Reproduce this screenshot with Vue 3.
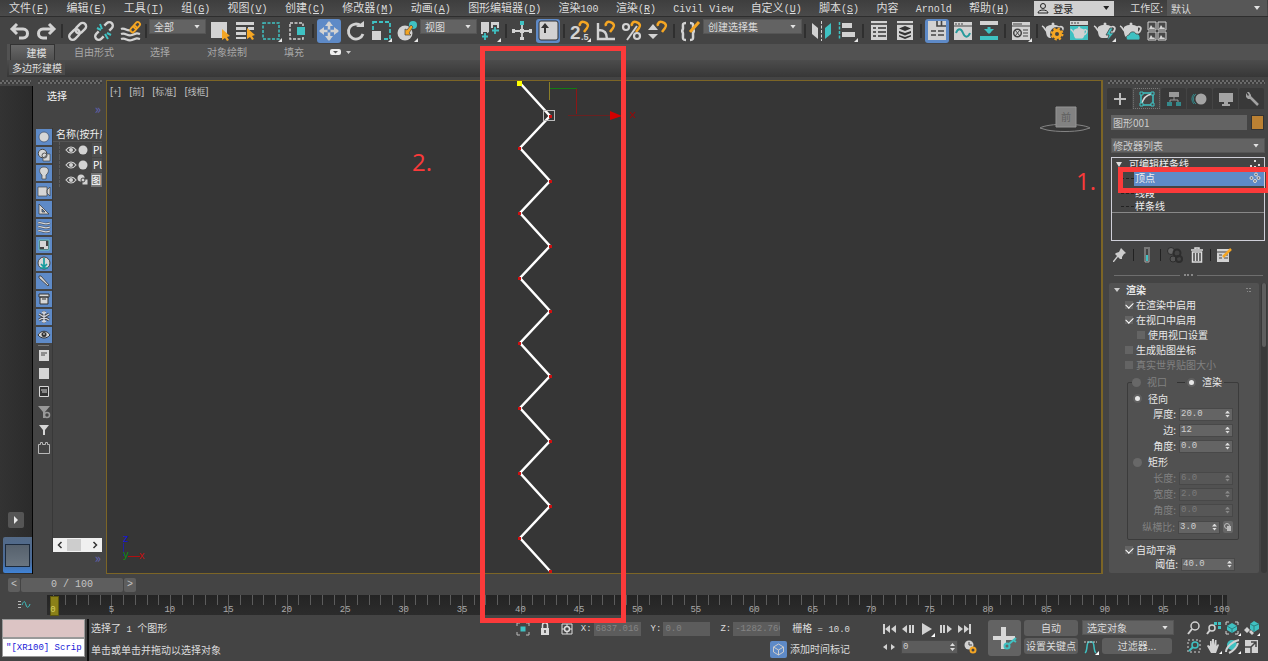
<script setup>
import { ref } from 'vue'

const L = '#d2d2d2'
const T = '#3fc1c2'
const O = '#f5a623'
const corner = '<path d="M24 20v4h-4z" fill="#e6e6e6"/>'
const teapot = '<path d="M6 9c4-3 10-3 14 0l0 4c0 4-2 7-4 7h-6c-3 0-4-4-4-7z" fill="#d2d2d2"/><circle cx="13" cy="6" r="1.500" fill="#d2d2d2"/><path d="M8 14C5 13 5 9 2 8M19 15c3 0 5-5 3-6-1-1-3 0-3 1" fill="none" stroke="#d2d2d2" stroke-width="1.800"/>'
const magnet = '<path d="M13 8c-1-3 2-5 4-4 4 1 5 4 3 6l-3 4" fill="none" stroke="#f5a623" stroke-width="2.500"/>'

const icons = {
  undo: `<path d="M10 6 5 11l5 5M5 11h11c6 0 6 9 0 9h-4" fill="none" stroke="${L}" stroke-width="3"/>`,
  redo: `<path d="m16 6 5 5-5 5M21 11H10c-6 0-6 9 0 9h4" fill="none" stroke="${L}" stroke-width="3"/>`,
  link: `<g fill="none" stroke="${L}" stroke-width="2.400" transform="rotate(-45 13 13)"><rect x="2" y="9.500" width="12" height="7" rx="3.500"/><rect x="11" y="9.500" width="12" height="7" rx="3.500"/></g>`,
  unlink: `<g fill="none" stroke="${L}" stroke-width="2.400" transform="rotate(-45 13 13)"><path d="M9 9.500H5.500a3.500 3.500 0 0 0 0 7H9M17 9.500h3.500a3.500 3.500 0 0 1 0 7H17"/></g><path d="m9 6 2 5M6 10l4 2M16 15l4 2M14 16l3 5" stroke="${T}" stroke-width="2"/>`,
  bind: `<path d="M4 11c4-2 6 3 10 1M4 16c5-2 6 3 11 1s5-2 8-1M4 21c5-2 6 3 11 1s5-2 8-1" fill="none" stroke="${L}" stroke-width="2.200"/><g fill="none" stroke="${O}" stroke-width="1.800" transform="rotate(-48 18 9)"><rect x="12" y="7" width="7" height="4.500" rx="2"/><rect x="17" y="7" width="7" height="4.500" rx="2"/></g>`,
  pick: `<path d="M5 4h16v16H5z" fill="${L}"/><path d="m16 11 0 11 3-2 2 3 2-1-2-3 3-1z" fill="${O}"/>`,
  pickList: `<path d="M4 4h18v3H4zM4 9h10v3H4zM4 14h10v3H4zM4 19h10v2H4zM16 9h6v3h-6z" fill="${L}"/><path d="m15 10 0 11 3-2 2 3 2-1-2-3 3-1z" fill="${O}"/>`,
  region: `<rect x="5" y="5" width="16" height="16" fill="none" stroke="${T}" stroke-width="1.500" stroke-dasharray="3 1.500"/>${corner}`,
  crossing: `<rect x="6" y="5" width="13" height="16" fill="none" stroke="${L}" stroke-width="1.500" stroke-dasharray="3 1.500"/><path d="M12 8h10v10H12z" fill="#444"/><path d="M13 9h8v8h-8z" fill="${T}"/>`,
  move: `<path d="M13 4v18M4 13h18" stroke="${L}" stroke-width="2.500"/><path d="m13 3 4 5H9zM13 23l4-5H9zM3 13l5-4v8zM23 13l-5-4v8z" fill="${L}"/><path d="M11.500 11.500h3v3h-3z" fill="#5e8ac7"/>`,
  rotate: `<path d="M19 8a7.500 7.500 0 1 0 2 8" fill="none" stroke="${L}" stroke-width="2.800"/><path d="M14 9h8V3z" fill="${L}"/>`,
  scale: `<rect x="5" y="4" width="17" height="17" fill="none" stroke="${T}" stroke-width="1.800" stroke-dasharray="4 2"/><path d="M3 12h12v11H3z" fill="#444"/><path d="M4 13h9v9H4z" fill="${L}"/>${corner}`,
  place: `<circle cx="11" cy="15" r="7.500" fill="${L}"/><circle cx="19" cy="7" r="4" fill="${T}"/><path d="m11 11 0 6h6l-2-2 4-6-2-2-4 5z" fill="${O}" stroke="#444" stroke-width=".7"/>${corner}`,
  pivot: `<path d="M4 4h8v10l-3 2H4zM14 4h8v7h-8z" fill="${L}"/><path d="M8 14v9M4 18h9M18 7v10M14 12h9" stroke="#444" stroke-width="4"/><path d="M8 15v7M5 18.500h6M18 9v7M15 12.500h7" stroke="${T}" stroke-width="1.800"/>${corner}`,
  manip: `<path d="M13 7v15M5 13h17" stroke="${L}" stroke-width="1.800"/><path d="M11 3h4v4h-4z" fill="${T}"/><path d="M11 11h4v4h-4zM11 19h4v3h-4zM3 11h3v4H3zM20 11h3v4h-3z" fill="${L}"/>`,
  keys: `<rect x="4" y="3" width="19" height="19" rx="2" fill="${L}" stroke="#333" /><path d="m10 5 4 5h-3v5H9v-5H6z" fill="#333"/>`,
  snap: `${magnet}<text x="3" y="21" font-family="Liberation Sans" font-weight="bold" font-size="19" fill="${L}">2</text><text x="14" y="22" font-family="Liberation Sans" font-weight="bold" font-size="9" fill="${L}">.5</text>${corner}`,
  angle: `${magnet}<path d="M5 5v16h17M6 12c5 0 8 3 8 9" fill="none" stroke="${L}" stroke-width="2.400"/>`,
  percent: `${magnet}<path d="M18 8 8 22" stroke="${L}" stroke-width="2"/><circle cx="7" cy="9" r="3" fill="none" stroke="${L}" stroke-width="2.200"/><circle cx="18" cy="18" r="3" fill="none" stroke="${L}" stroke-width="2.200"/>`,
  spin: `${magnet}<path d="m8 6 5 6H3zM8 21l5-5H3z" fill="${L}"/>`,
  named: `<path d="M9 5c-4 0-3 2-3 5 0 2-1 3-2 3 1 0 2 1 2 3 0 4-1 6 3 6M13 5c4 0 3 2 3 5 0 2 1 3 2 3-1 0-2 1-2 3 0 4 1 6-3 6" fill="none" stroke="${L}" stroke-width="2.500"/><path d="m13 14 9-10" stroke="${O}" stroke-width="3"/>`,
  mirror: `<path d="m4 5 6 5v11l-6-5z" fill="${L}"/><path d="m23 5-6 5v11l6-5z" fill="${T}"/><path d="M13.500 3v20" stroke="${L}" stroke-dasharray="3 1.500"/>`,
  align: `<path d="M5.500 4v18" stroke="${T}" stroke-width="1.500" stroke-dasharray="3 1.500"/><path d="M8 5h10v5H8zM8 14h13v5H8z" fill="${L}"/>${corner}`,
  layers: `<path d="M5 3h16v19H5z" fill="${L}"/><path d="M5 6h16M7 10h3M12 10h8M7 14h3M12 14h8M7 18h3M12 18h8" stroke="#333" stroke-width="1.500"/>`,
  stack: `<path d="M5 3h16v19H5z" fill="${L}"/><path d="M5 6h16" stroke="#333" stroke-width="1.500"/><path d="m13 8 6 2.500-6 2.500-6-2.500zM7 13l6 2 6-2v2l-6 2.500L7 15zM7 17l6 2 6-2v1.500L13 21l-6-2.500z" fill="#333"/>`,
  ribbon: `<path d="M4 3h18v19H4z" fill="${L}"/><path d="M13 3v5h9M17.500 3v5M7 13h5M7 17h5M14 13h6M14 17h6" fill="none" stroke="#444" stroke-width="1.600"/>`,
  curve: `<path d="M4 4h18v18H4z" fill="${L}"/><path d="M5 6h2M8 6h2M11 6h2M4 8h18" stroke="#444"/><path d="M6 15c2-5 5-5 7 0s5 5 7 0" fill="none" stroke="#259a9c" stroke-width="2"/>`,
  schematic: `<path d="M4 3h18v4H4z" fill="${L}"/><path d="M4 18h18v4H4z" fill="${T}"/><path d="M13 9v6" fill="none" stroke="${T}" stroke-width="3"/><path d="M8 11h10l-5 5z" fill="${T}"/>`,
  material: `<path d="M4 4h18v18H4z" fill="${L}"/><path d="M5 6h9M4 8h18M15 12h5M15 15h5M15 18h5" stroke="#444"/><circle cx="9.500" cy="15" r="3.800" fill="none" stroke="#444" stroke-width="1.500"/><path d="m7 12 5 6M12 12l-5 6" stroke="#444"/>${corner}`,
  renderSetup: `${teapot}<circle cx="17" cy="16" r="7" fill="#444"/><circle cx="17" cy="16" r="3.500" fill="none" stroke="${O}" stroke-width="3"/><circle cx="17" cy="16" r="5.500" fill="none" stroke="${O}" stroke-width="2" stroke-dasharray="2.300 2"/>`,
  renderFrame: `<path d="M4 3h18v4H4z" fill="${L}"/><path d="M5 5h8" stroke="#444" stroke-dasharray="2 1"/><path d="M4 8h18v14H4z" fill="${T}"/><g transform="translate(3 5) scale(.78)">${teapot}</g>`,
  render: `${teapot}<path d="m18 10-4 7h3l-2 6 7-8h-4l3-5z" fill="${T}" stroke="#444" stroke-width=".8"/>${corner}`,
  cloud: `${teapot}<path d="M9 22c-2-4 1-5 2-5 1-4 6-4 7-1 4-1 5 5 3 6z" fill="${T}" stroke="#444" stroke-width=".8"/>`,
  gallery: `<path d="M4 4h8v8H4zM14 4h8v8h-8zM4 14h8v8H4zM14 14h8v8h-8z" fill="#484848" stroke="${L}"/><path d="m5 11 2-4 2 3 1-1 1 2zM15 11l2-4 2 3 1-1 1 2zM5 21l2-4 2 3 1-1 1 2zM15 21l2-4 2 3 1-1 1 2z" fill="${L}"/>`
}
const toolsA = ['undo', 'redo', '|', 'link', 'unlink', 'bind', '|']
const toolsB = ['pick', 'pickList', 'region', 'crossing', '|', 'move', 'rotate', 'scale', 'place']
const toolsC = ['pivot', '|', 'manip', 'keys', '|', 'snap', 'angle', 'percent', 'spin', '|', 'named']
const toolsD = ['|', 'mirror', 'align', '|', 'layers', 'stack', '|', 'ribbon', 'curve', 'schematic', '|', 'material', '|', 'renderSetup', 'renderFrame', 'render', 'cloud', 'gallery']
const groups = [
  { tools: toolsA, combo: '全部', cls: 'narrow' },
  { tools: toolsB, combo: '视图', cls: 'narrow' },
  { tools: toolsC, combo: '创建选择集', cls: 'wide' },
  { tools: toolsD }
]
const active = ['move', 'keys', 'ribbon']

const menus = [
  ['文件', 'F'], ['编辑', 'E'], ['工具', 'T'], ['组', 'G'], ['视图', 'V'], ['创建', 'C'], ['修改器', 'M'], ['动画', 'A'],
  ['图形编辑器', 'D'], ['渲染', '', '100'], ['渲染', 'R'], ['', '', 'Civil View'], ['自定义', 'U'], ['脚本', 'S'], ['内容'], ['', '', 'Arnold'], ['帮助', 'H']
]

const circ = `<circle cx="8" cy="8" r="5" fill="#d6d6d6" stroke="#3c4c66" stroke-width=".7"/>`
const filters = [
  circ,
  `<path d="M7 7h7v7H7z" fill="#d6d6d6" stroke="#444" stroke-width=".7"/><circle cx="6.500" cy="6.500" r="4.200" fill="#d6d6d6" stroke="#444"/><circle cx="8.500" cy="8.500" r="2.500" fill="none" stroke="#555"/>`,
  `<path d="M8 2c6 0 5 6 2 8v4H6v-4C3 8 2 2 8 2z" fill="#d6d6d6" stroke="#444" stroke-width=".7"/>`,
  `<path d="M2 4h9v9H2zM11 7l3-3v9l-3-3z" fill="#d6d6d6" stroke="#444" stroke-width=".7"/>`,
  `<path d="M3 3v10h10zM6 8v3h3z" fill="#d6d6d6" fill-rule="evenodd" stroke="#333" stroke-width=".7"/>`,
  `<path d="M2 4c4-2 5 3 12 0M2 8c4-2 5 3 12 0M2 12c4-2 5 3 12 0" fill="none" stroke="#444" stroke-width="2.200"/><path d="M2 4c4-2 5 3 12 0M2 8c4-2 5 3 12 0M2 12c4-2 5 3 12 0" fill="none" stroke="#d4d8de" stroke-width="1.300"/>`,
  `<path d="M3 3h10v10H3z" fill="#444" stroke="#69c6c6"/><path d="M4 4h6v6H4zM8 9h4v3H8z" fill="#d6d6d6"/>`,
  `<circle cx="8" cy="8" r="6" fill="#d6d6d6" stroke="#444"/><path d="M8 3v9M5 9l3 3 3-3M4 13h8" fill="none" stroke="#149c9e" stroke-width="1.700"/>`,
  `<path d="m3 3 2 0 8 9-1 1-9-8z" fill="#d6d6d6" stroke="#333" stroke-width=".8"/>`,
  `<path d="M3 3h10v3H3zM4 6h8v7H4z" fill="#d6d6d6" stroke="#333"/><path d="M6 8h4" stroke="#333"/>`,
  `<path d="M8 2v12M3 5l10 6M13 5 3 11" stroke="#444" stroke-width="3"/><path d="M8 2v12M3 5l10 6M13 5 3 11M6 3l2 2 2-2M6 13l2-2 2 2" fill="none" stroke="#d0d4dc" stroke-width="1.300"/>`,
  `<path d="M2 8c3-5 9-5 12 0-3 4-9 4-12 0z" fill="#d6d6d6" stroke="#333"/><circle cx="8" cy="7.500" r="2.500" fill="#333"/><circle cx="8" cy="7" r=".8" fill="#fff"/>`
]
const eye = `<path d="M1 6c3-4 7-4 10 0-3 4-7 4-10 0z" fill="none" stroke="#d2d2d2" stroke-width="1.200"/><circle cx="6" cy="6" r="2" fill="#d2d2d2"/>`
const nodes = [{ n: 'Pl' }, { n: 'Pl' }, { n: '图', shape: true }]

const zig = Array.from({ length: 16 }, (_, i) => [i % 2 ? 550 : 520, Math.round(83 + i * 32.53)])
const zigPath = zig.map(p => p.join(',')).join(' ')

const tabs = [
  `<path d="M10 4v12M4 10h12" stroke="#bdbdbd" stroke-width="2"/>`,
  `<path d="M4 4h12v12H4z" fill="none" stroke="${T}" stroke-width="1.500"/><path d="M5 15c1-6 4-9 10-10" fill="none" stroke="#ddd" stroke-width="1.500"/><path d="M3 3h3v3H3zM14 3h3v3h-3zM3 14h3v3H3zM14 14h3v3h-3z" fill="#444" stroke="${T}"/>`,
  `<path d="M5 3h10v5H5z" fill="#999"/><path d="M10 8v3M6 14v-3h8v3" stroke="#999" fill="none"/><path d="M3 13h5v4H3zM12 13h5v4h-5z" fill="#34898b"/>`,
  `<circle cx="11" cy="10" r="5.500" fill="#a4a4a4"/><path d="M6 5a6 6 0 0 0 0 10M4 5a7 7 0 0 0 0 10" fill="none" stroke="#34898b"/>`,
  `<path d="M3 4h14v9H3zM8 13h4v2h2v2H6v-2h2z" fill="#a4a4a4"/>`,
  `<path d="m8 8 8 8" stroke="#a4a4a4" stroke-width="2.500"/><path d="M4 4v4l2 2h3V6L7 3H5l2 3-1 1z" fill="#a4a4a4"/>`
]
const checks = ref([
  { t: '在渲染中启用', v: true, d: 0 },
  { t: '在视口中启用', v: true, d: 0 },
  { t: '使用视口设置', v: false, d: 1 },
  { t: '生成贴图坐标', v: false, d: 0 },
  { t: '真实世界贴图大小', v: false, d: 0, off: true }
])
const radial = [['厚度', '20.0'], ['边', '12'], ['角度', '0.0']]
const rect = [['长度', '6.0'], ['宽度', '2.0'], ['角度', '0.0']]

const play = [
  `<path d="M3 4h2v10H3zM10 5v8L5 9zM16 5v8l-5-4z" fill="${L}"/>`,
  `<path d="M8 5v8L3 9zM10 5h2v8h-2zM13 5h2v8h-2z" fill="${L}"/>`,
  `<path d="M4 3v12l10-6z" fill="${L}"/><path d="M17 13v4h-4z" fill="#fff"/>`,
  `<path d="M10 5v8l5-4zM3 5h2v8H3zM6 5h2v8H6z" fill="${L}"/>`,
  `<path d="M13 4h2v10h-2zM2 5v8l5-4zM8 5v8l5-4z" fill="${L}"/>`
]
const c2 = '<path d="M18 14v3h-3z" fill="#fff"/>'
const nav = [
  `<circle cx="10" cy="7" r="4" fill="none" stroke="${L}" stroke-width="1.500"/><path d="m7 10-4 5" stroke="${L}" stroke-width="2"/>`,
  `<path d="M10 3h3v3h-3zM14 3h3v3h-3zM14 7h3v3h-3z" fill="${T}"/><circle cx="8" cy="9" r="3" fill="none" stroke="${L}" stroke-width="1.500"/><path d="m6 11-3 4" stroke="${L}" stroke-width="2"/>`,
  `<path d="M3 6V3h3M12 3h3v3M3 12v3h3M12 15h3v-3" fill="none" stroke="${L}"/><path d="m9 4 5 3v4l-5 3-5-3V7z" fill="${T}"/><path d="m4 7 5 3 5-3M9 10v4" stroke="#2d7f80" fill="none"/>${c2}`,
  `<path d="m12 2 5 3v5l-5 3-4-3V5z" fill="${T}"/><path d="m8 5 4 2 5-2M12 7v5" stroke="#2d7f80" fill="none"/><path d="m2 11 3-3 3 3-3 3zM7 13l2-2 3 3-2 2z" fill="${L}"/>${c2}`,
  `<rect x="3" y="3" width="12" height="12" fill="none" stroke="${L}" stroke-dasharray="2 2"/><circle cx="10" cy="8" r="3" fill="none" stroke="${T}" stroke-width="1.500"/><path d="m8 10-4 4" stroke="${T}" stroke-width="2"/>`,
  `<path d="M6 9V4h1.500v4L8 2h2v6l1-5h1.500v6l1.500-2 1 1-3 8H7L3 9l1-1z" fill="${L}"/>${c2}`,
  `<circle cx="9" cy="8" r="5" fill="${T}"/><path d="M3 15C3 10 10 4 16 3M6 16C10 14 14 10 15 6" fill="none" stroke="${L}" stroke-width="2"/>${c2}`,
  `<path d="M3 3h13v13H3z" fill="${L}"/><path d="M9 5h5v5M14 5l-5 5M3 10h6v6" fill="none" stroke="#444" stroke-width="1.500"/>`
]
</script>

<template>
  <div class="app">
    <nav class="menubar">
      <div class="menus">
        <a v-for="(m, i) in menus" :key="i" href="#">{{ m[0] }}<span v-if="m[1]" class="la">(<u>{{ m[1] }}</u>)</span><span v-if="m[2]" class="la">{{ m[2] }}</span></a>
      </div>
      <div class="combo login">
        <svg width="12" height="12" viewBox="0 0 12 12"><circle cx="6" cy="4" r="2.500" fill="none" stroke="#222" /><path d="M1 11c0-4 10-4 10 0z" fill="none" stroke="#222" /></svg>
        <select aria-label="登录"><option>登录</option></select>
      </div>
      <label class="wslabel" for="ws">工作区:</label>
      <div class="combo ws"><select id="ws"><option>默认</option></select></div>
    </nav>

    <div class="toolbar">
      <template v-for="(g, gi) in groups" :key="gi">
        <template v-for="(t, i) in g.tools" :key="gi + '-' + i">
          <i v-if="t === '|'" class="sep"></i>
          <button v-else class="tool" :class="{ on: active.includes(t) }" :aria-label="t"><svg width="26" height="26" viewBox="0 0 26 26" v-html="icons[t]"></svg></button>
        </template>
        <div v-if="g.combo" class="combo" :class="g.cls"><select :aria-label="g.combo"><option>{{ g.combo }}</option></select></div>
      </template>
    </div>

    <div class="ribbon">
      <button class="rtab cur">建模</button>
      <button class="rtab">自由形式</button>
      <button class="rtab r2">选择</button>
      <button class="rtab r3">对象绘制</button>
      <button class="rtab r4">填充</button>
      <button class="rmin" aria-label="最小化"><svg width="22" height="8" viewBox="0 0 22 8"><rect width="11" height="6" y="1" rx="2" fill="#eee" /><path d="M3 3h5L5.500 5.500z" fill="#555" /><path d="M16 3h5l-2.500 3z" fill="#ccc" /></svg></button>
    </div>
    <div class="ribbon2"><button>多边形建模</button></div>

    <main class="main">
      <aside class="dock">
        <div class="grip"></div>
        <div class="dockbody">
          <button class="playbtn" aria-label="展开"><svg width="8" height="10" viewBox="0 0 8 10"><path d="M2 1v8l4-4z" fill="#e8e8e8" /></svg></button>
          <button class="vpbtn" aria-label="视口布局"><span></span></button>
        </div>
      </aside>
      <aside class="scene">
        <div class="grip"></div>
        <h2>选择</h2>
        <div class="more">»</div>
        <div class="explorer">
          <div class="filters">
            <button v-for="(f, i) in filters" :key="i" class="filter" :aria-label="'过滤 ' + (i + 1)"><svg width="16" height="16" viewBox="0 0 16 16" v-html="f"></svg></button>
            <i></i>
            <button class="plain" aria-label="全部"><svg width="16" height="18" viewBox="0 0 16 18"><path d="M3 4h10v11H3z" fill="#d6d6d6" /><path d="M5 7h6M5 9h4" stroke="#444" /></svg></button>
            <button class="plain" aria-label="无"><svg width="16" height="18" viewBox="0 0 16 18"><path d="M3 4h10v11H3z" fill="#d6d6d6" /></svg></button>
            <button class="plain" aria-label="反转"><svg width="16" height="18" viewBox="0 0 16 18"><path d="M3.500 4.500h9v10h-9z" fill="#333" stroke="#d6d6d6" /><path d="M5 8h6M6 10h5" stroke="#d6d6d6" /></svg></button>
            <button class="plain gap" aria-label="过滤器设置"><svg width="16" height="18" viewBox="0 0 16 18"><path d="M2 3h12l-5 6v6H7V9z" fill="#999" /><circle cx="11" cy="12" r="2.500" fill="none" stroke="#999" stroke-width="1.500" /></svg></button>
            <button class="plain" aria-label="过滤器"><svg width="16" height="18" viewBox="0 0 16 18"><path d="M3 4h10L9 9v5H7V9z" fill="#d6d6d6" /></svg></button>
            <button class="plain" aria-label="容器"><svg width="16" height="18" viewBox="0 0 16 18"><path d="M2.500 5.500h2v-2h2v2h3v-2h2v2h2v9h-11z" fill="none" stroke="#b8b8b8" /></svg></button>
          </div>
          <div class="tree">
            <div class="th">名称(按升序</div>
            <div v-for="(n, i) in nodes" :key="i" class="tr">
              <i class="branch"></i>
              <svg width="12" height="12" viewBox="0 0 12 12" v-html="eye"></svg>
              <svg width="12" height="12" viewBox="0 0 12 12"><path v-if="n.shape" d="M5 5h6v6H5z" fill="#d2d2d2" stroke="#444" /><circle :cx="n.shape ? 4 : 6" :cy="n.shape ? 4 : 6" :r="n.shape ? 3.500 : 4.500" fill="#d2d2d2" /><circle v-if="n.shape" cx="6" cy="6" r="2" fill="none" stroke="#444" /></svg>
              <span :class="{ sel: n.shape }">{{ n.n }}</span>
            </div>
            <div class="hscroll"><button aria-label="向左"><svg width="8" height="8" viewBox="0 0 8 8"><path d="M5.500 1 2.500 4l3 3" /></svg></button><i></i><button aria-label="向右"><svg width="8" height="8" viewBox="0 0 8 8"><path d="m2.500 1 3 3-3 3" /></svg></button></div>
          </div>
        </div>
        <div class="more">»</div>
      </aside>

      <section class="viewport">
        <div class="vplabel"><span><b>[</b>+<b>]</b></span><span><b>[</b>前<b>]</b></span><span><b>[</b>标准<b>]</b></span><span><b>[</b>线框<b>]</b></span></div>
        <svg class="canvas">
          <g transform="translate(-107 -81)">
            <path d="M549.500 82v18" stroke="#8c7f28" />
            <path d="M550 88.500h27" stroke="#127a12" />
            <path d="M576.500 89v25" stroke="#8d1616" />
            <path d="M568 115.500h43" stroke="#6a2020" />
            <path d="M610 111v9l12-4z" fill="#d40000" />
            <path d="m630 112 5 6M635 112l-5 6" stroke="#a80000" />
            <polyline :points="zigPath" fill="none" stroke="#fff" stroke-width="2.500" />
            <rect v-for="(p, i) in zig.slice(1)" :key="i" :x="p[0] - (i % 2 ? 2 : 1)" :y="p[1] - 1" width="3" height="3" fill="#d01010" />
            <rect x="517" y="81" width="5" height="5" fill="#ff0" />
            <rect x="543.500" y="110.500" width="11" height="10" fill="none" stroke="#bbb" />
            <path d="M123.500 543v13" stroke="#2020a0" />
            <path d="M128 556.500h12" stroke="#b01010" />
            <text x="123" y="542" class="ax" fill="#1515d8">z</text>
            <text x="123" y="558" class="ax" fill="#109010">y</text>
            <text x="139" y="559" class="ax" fill="#c01010">x</text>
          </g>
        </svg>
        <svg class="cube" width="52" height="30" viewBox="0 0 52 30">
          <path d="M1 23C9 18 43 18 51 23L44 25C34 27 18 27 8 25Z" fill="none" stroke="#858585" />
          <path d="M17 2h20v20H17z" fill="#828282" stroke="#949494" />
          <text x="22" y="16" font-size="10" fill="#5e5e5e">前</text>
        </svg>
        <span class="note two">2.</span>
      </section>

      <aside class="cmd">
        <div class="grip"></div>
        <div class="tabs"><button v-for="(t, i) in tabs" :key="i" :class="{ on: i === 1 }" :aria-label="'面板 ' + (i + 1)"><svg width="20" height="20" viewBox="0 0 20 20" v-html="t"></svg></button></div>
        <div class="namerow"><input class="field" aria-label="名称" value="图形001"><button class="swatch" aria-label="颜色"></button></div>
        <div class="combo mods"><select aria-label="修改器列表"><option>修改器列表</option></select></div>
        <div class="stackbox">
          <div class="srow top"><svg width="6" height="5" viewBox="0 0 6 5"><path d="M0 0h6L3 5z" fill="#ddd" /></svg>可编辑样条线<svg class="dots" width="12" height="12" viewBox="0 0 12 12"><path d="M5 2h2v2H5zM1 7h2v2H1zM5 8h2v2H5zM9 6h2v2H9z" fill="#ddd" /></svg></div>
          <div class="srow on"><i></i><span>顶点<svg class="dots" width="12" height="12" viewBox="0 0 12 12" fill="#777" stroke="#ddd"><circle cx="7" cy="2.500" r="1.500" /><circle cx="2.500" cy="6" r="1.500" /><circle cx="9.500" cy="6" r="1.500" /><circle cx="6" cy="9" r="1.500" /></svg></span></div>
          <div class="srow"><i></i><span>线段</span></div>
          <div class="srow last"><i></i><span>样条线</span></div>
        </div>
        <div class="stacktools">
          <button aria-label="锁定堆栈"><svg width="16" height="18" viewBox="0 0 16 18"><path d="m9 2 5 5-2 1-2 3 0 2-2 0-2-2-4 5-1 0 0-1 4-5-2-2 1-1 3-1 1-2z" fill="#ccc" /></svg></button><i></i>
          <button aria-label="显示最终结果"><svg width="16" height="18" viewBox="0 0 16 18"><path d="M5 2h6M6 3v13h4V3" fill="none" stroke="#aaa" /><path d="M7 9h2v6H7z" fill="#3fc1c2" /></svg></button><i></i>
          <button aria-label="使唯一"><svg width="18" height="18" viewBox="0 0 18 18"><circle cx="5" cy="5" r="3.500" fill="#666" stroke="#2d2d2d" /><circle cx="11" cy="7" r="3.500" fill="none" stroke="#2d2d2d" stroke-width="2" /><circle cx="7" cy="13" r="3" fill="#555" stroke="#2d2d2d" /><circle cx="13" cy="13" r="3" fill="none" stroke="#2d2d2d" stroke-width="2" /></svg></button>
          <button aria-label="删除"><svg width="16" height="18" viewBox="0 0 16 18"><path d="M2 4h12M6 3V2h4v1" stroke="#ddd" stroke-width="1.500" fill="none" /><path d="M3.500 6h9v10h-9zM6.500 7v8M9.500 7v8" stroke="#ddd" stroke-width="1.500" fill="none" /></svg></button><i></i>
          <button aria-label="配置"><svg width="16" height="18" viewBox="0 0 16 18"><path d="M1 3h12v13H1z" fill="#d2d2d2" /><path d="M1 6h12M3 9h3M8 9h4M3 12h3M8 12h4" stroke="#444" /><path d="m7 11 8-8" stroke="#f5a623" stroke-width="2.500" /></svg></button>
        </div>
        <div class="split"><i></i><b></b><i></i></div>
        <div class="rollwrap">
          <div class="rollout">
            <h3><svg width="6" height="5" viewBox="0 0 6 5"><path d="M0 0h6L3 4z" fill="#ccc" /></svg>渲染<svg class="hg" width="5" height="5" viewBox="0 0 5 5"><path d="M0 0h2v1H0zM3 0h2v1H3zM1 3h1v1H1zM3 3h2v1H3z" fill="#888" /></svg></h3>
            <label v-for="c in checks" :key="c.t" class="ck" :class="{ in: c.d, off: c.off }"><input v-model="c.v" type="checkbox" :disabled="c.off">{{ c.t }}</label>
            <fieldset>
              <legend><label class="off"><input type="radio" name="mode" disabled>视口</label><i></i><label><input type="radio" name="mode" checked>渲染</label></legend>
              <label class="rd"><input type="radio" name="shape" checked>径向</label>
              <label v-for="r in radial" :key="r[0]" class="sp">{{ r[0] }}:<span class="spin"><input :value="r[1]"></span></label>
              <label class="rd"><input type="radio" name="shape">矩形</label>
              <label v-for="r in rect" :key="r[0]" class="sp off"><span>{{ r[0] }}:</span><span class="spin"><input :value="r[1]" disabled></span></label>
              <div class="sp ratio"><label for="ratio">纵横比:</label><span class="spin"><input id="ratio" value="3.0"></span><button aria-label="锁定纵横比"><svg width="10" height="10" viewBox="0 0 10 10"><circle cx="4" cy="4" r="2.500" fill="none" stroke="#bbb" /><path d="M4 4h4v5H4z" fill="#bbb" /></svg></button></div>
            </fieldset>
            <label class="ck smooth"><input type="checkbox" checked>自动平滑</label>
            <label class="sp th2">阈值:<span class="spin"><input value="40.0"></span></label>
          </div>
          <div class="vscroll"><i></i></div>
        </div>
      </aside>
    </main>

    <div class="slider">
      <button aria-label="上一帧">&lt;</button><button class="thumb">0 / 100</button><button aria-label="下一帧">&gt;</button>
    </div>
    <div class="track">
      <button class="mini" aria-label="迷你曲线编辑器"><svg width="14" height="10" viewBox="0 0 14 10"><path d="M1 1.500h3M1 4.500h3M1 7.500h3" stroke="#bbb" /><path d="M5 5c2-5 3-4 4 0s3 2 4-1" fill="none" stroke="#3fc1c2" /></svg></button>
      <div class="ruler">
        <div v-for="f in 101" :key="f" class="tick" :class="{ major: (f - 1) % 5 === 0, first: f === 1, end: f === 101 }"><span v-if="(f - 1) % 5 === 0">{{ f - 1 }}</span></div>
      </div>
    </div>

    <footer class="status">
      <div class="listener"><div></div><input aria-label="侦听器" value="&quot;[XR100] Scrip"></div>
      <div class="msgs"><p>选择了<span> 1 </span>个<span> </span>图形</p><p>单击或单击并拖动以选择对象</p></div>
      <div class="coords">
        <div class="crow">
          <button aria-label="孤立"><svg width="16" height="16" viewBox="0 0 16 16"><path d="M5.500 5.500h5v5h-5z" fill="#3fc1c2" /><path d="M2 5V2h3M11 2h3v3M2 11v3h3M11 14h3v-3" fill="none" stroke="#bbb" /></svg></button>
          <button aria-label="锁定"><svg width="16" height="16" viewBox="0 0 16 16"><path d="M4 7h8v7H4z" fill="#ddd" /><path d="M5.500 7V4c0-3 5-3 5 0v3" fill="none" stroke="#ddd" stroke-width="1.500" /><path d="M8 9v3" stroke="#444" stroke-width="1.500" /></svg></button>
          <button aria-label="坐标模式"><svg width="16" height="16" viewBox="0 0 16 16"><path d="M3 3h10v10H3z" fill="none" stroke="#ddd" /><circle cx="8" cy="8" r="2.500" fill="none" stroke="#ddd" stroke-width="1.500" /><path d="M8 3v2M8 11v2M3 8h2M11 8h2" stroke="#ddd" /></svg></button>
          <label>X:<input value="6837.016" disabled></label><label>Y:<input value="0.0" disabled></label><label>Z:<input value="-1282.766" disabled></label>
          <span class="grid">栅格<span> = 10.0</span></span>
        </div>
        <div class="crow marker"><button aria-label="标记"><svg width="17" height="17" viewBox="0 0 17 17"><path d="m8.500 3 5 3v5l-5 3-5-3V6zM3.500 6l5 3 5-3M8.500 9v5" fill="none" stroke="#ccc" /></svg></button><a href="#">添加时间标记</a></div>
      </div>
      <div class="playback">
        <div class="prow"><button v-for="(p, i) in play" :key="i" :aria-label="'播放 ' + (i + 1)"><svg width="18" height="18" viewBox="0 0 18 18" v-html="p"></svg></button></div>
        <div class="prow"><button aria-label="关键点模式"><svg width="18" height="18" viewBox="0 0 18 18"><path d="M7 6v6L3 9zM11 6v6l4-3z" fill="#d2d2d2" /></svg></button><span class="spin frame"><input aria-label="当前帧" value="0"></span><button aria-label="时间配置"><svg width="18" height="18" viewBox="0 0 18 18"><circle cx="8" cy="7" r="4.500" fill="#d2d2d2" /><path d="M8 4v3h3" stroke="#444" fill="none" /><circle cx="12" cy="12" r="2.500" fill="#444" stroke="#f5a623" stroke-width="2" /></svg></button></div>
      </div>
      <button class="bigkey" aria-label="设置关键点"><svg width="32" height="34" viewBox="0 0 32 34"><path d="M12 6h5v9h9v4h-9v9h-5v-9H4v-4h8z" fill="#d8d8d8" /><circle cx="18" cy="25" r="2.500" fill="#666" stroke="#3fc1c2" stroke-width="2" /><path d="m20 23 7-6M24 19l3 2" stroke="#3fc1c2" stroke-width="2" /></svg></button>
      <div class="keys">
        <button class="btn">自动</button><div class="combo selset"><select aria-label="选定对象"><option>选定对象</option></select></div>
        <button class="btn">设置关键点</button><div class="kf"><button aria-label="切线"><svg width="18" height="18" viewBox="0 0 18 18"><path d="M3 15C6 13 4 4 7 4h3c3 0 1 9 4 11" fill="none" stroke="#3fc1c2" stroke-width="1.500" /><path d="M2 4h13" stroke="#ccc" stroke-dasharray="2 1" /><path d="M17 13v4h-4z" fill="#fff" /></svg></button><button class="btn">过滤器...</button></div>
      </div>
      <div class="nav"><button v-for="(n, i) in nav" :key="i" :aria-label="'导航 ' + (i + 1)"><svg width="18" height="18" viewBox="0 0 18 18" v-html="n"></svg></button></div>
    </footer>

    <div class="redbox tall"></div>
    <div class="redbox short"></div>
    <span class="note one">1.</span>
  </div>
</template>

<style>
html, body { margin: 0; background: #444; }
</style>

<style scoped>
.app { position: relative; display: flex; flex-direction: column; min-height: 100vh; overflow: hidden; background: #444; color: #dcdcdc; font: 10px/14px "Noto Sans CJK SC", sans-serif; box-sizing: border-box; }
.app * { box-sizing: border-box; }
button, input, select { font: inherit; color: inherit; border: 0; padding: 0; margin: 0; background: none; border-radius: 0; min-width: 0; outline: 0; }
button { display: flex; align-items: center; justify-content: center; }
svg { display: block; flex: none; }
a { color: inherit; text-decoration: none; }
.la { font: 10px/14px "Liberation Mono", monospace; }
.combo { position: relative; display: flex; align-items: center; height: 15px; background: #636363; border: 1px solid #555; }
.combo select { appearance: none; width: 100%; height: 100%; padding-left: 4px; line-height: 13px; }
.combo::after { content: ""; position: absolute; right: 5px; width: 6px; height: 4px; background: #e2e2e2; clip-path: polygon(0 0, 100% 0, 50% 100%); pointer-events: none; }

.menubar { display: flex; align-items: center; height: 17px; padding-left: 9px; background: linear-gradient(#3e3e3e, #4a4a4a); border-bottom: 1px solid #2e2e2e; font-size: 11px; white-space: nowrap; flex: none; }
.menus { flex: 1; display: flex; justify-content: space-between; }
.menubar a { flex: none; line-height: 15px; }
.login { width: 80px; margin-left: 25px; background: #d0d0d0; color: #222; border: 0; padding-left: 3px; font-size: 10px; }
.login::after { background: #222; }
.wslabel { font-size: 10px; margin: 0 4px 0 16px; }
.ws { width: 100px; height: 16px; border: 0; font-size: 10px; background: #575757; margin-right: 1px; }
.ws::after { right: 7px; }

.toolbar { display: flex; align-items: center; height: 27px; padding: 1px 0 0 7px; flex: none; }
.tool { width: 26px; height: 26px; flex: none; }
.tool.on { background: #5e8ac7; border-radius: 3px; width: 24px; height: 24px; margin: 0 1px; }
.sep { width: 2px; height: 14px; margin: 0 2px; background: #2f2f2f; flex: none; }
.toolbar .combo { align-self: flex-start; margin-top: 1px; }
.narrow { width: 57px; }
.wide { width: 99px; }

.ribbon { display: flex; align-items: stretch; height: 16px; padding-left: 10px; margin-left: 7px; background: #525252; color: #a8a8a8; flex: none; }
.rtab { justify-content: flex-start; width: 86px; line-height: 14px; }
.rtab.cur { width: 45px; justify-content: center; padding-left: 8px; margin-left: -7px; margin-right: 12px; background: linear-gradient(#686868, #505050); border: 1px solid #333; border-bottom: 0; color: #e4e4e4; }
.rtab.cur + .rtab { width: 76px; margin-left: 7px; }
.rtab.r2 { width: 57px; }
.rtab.r3 { width: 77px; }
.rtab.r4 { width: 46px; }
.ribbon2 { display: flex; height: 17px; margin-left: 7px; background: linear-gradient(#4c4c4c, #373737); flex: none; padding-left: 2px; }
.ribbon2 button { width: 56px; background: #4b4b4b; height: 15px; }

.main { display: flex; flex: 1; margin-top: 3px; }
.grip { height: 4px; flex: none; background: repeating-conic-gradient(#6a6a6a 0 25%, #3c3c3c 0 50%) 0 0 / 4px 4px; }
.dock { display: flex; flex-direction: column; width: 33px; }
.dock .grip { margin-right: 2px; }
.dockbody { flex: 1; margin-top: 2px; display: flex; flex-direction: column; justify-content: flex-end; background: linear-gradient(90deg, #333, #2b2b2b); border-right: 1px solid #050505; }
.playbtn { width: 16px; height: 16px; margin: 0 0 9px 8px; background: #555; border-radius: 2px; }
.vpbtn { width: 29px; height: 36px; margin: 0 0 1px 3px; background: linear-gradient(#546a86, #4a6b99 70%, #3f83d8); border-radius: 2px 0 0 2px; }
.vpbtn span { width: 25px; height: 23px; background: linear-gradient(#56616d, #6a7580); border: 1px solid #1c2a3c; }
.scene { display: flex; flex-direction: column; width: 73px; padding: 0 4px 8px 0; }
.scene .grip { margin: 0 0 0 5px; }
.scene h2 { margin: 5px 0 0 14px; font-size: 10px; line-height: 14px; font-weight: 400; color: #f4f4f4; }
.more { height: 14px; line-height: 12px; font-size: 13px; text-align: right; padding-right: 1px; color: #6262b4; }
.explorer { flex: 1; display: flex; margin-top: 11px; }
.filters { width: 20px; padding: 1px 1px 0 3px; border-right: 1px solid #383838; }
.filter { width: 16px; height: 16px; margin-bottom: 2px; background: #5e8ac7; }
.filters > i { display: block; height: 1px; margin: 2px 2px 0; background: #777; }
.plain { width: 16px; height: 18px; }
.plain.gap { margin-top: 3px; }
.tree { flex: 1; min-width: 0; display: flex; flex-direction: column; }
.th { padding-left: 3px; height: 14px; line-height: 12px; border-bottom: 1px solid #555; white-space: nowrap; overflow: hidden; color: #eee; }
.tr { display: flex; align-items: center; height: 15px; white-space: nowrap; overflow: hidden; }
.branch { width: 6px; height: 15px; margin-left: 6px; border-left: 1px dashed #5a5a5a; flex: none; }
.tr span { flex: 1; margin-left: 3px; padding-left: 1px; line-height: 14px; background: #4e4e4e; color: #fff; overflow: visible; }
.tr span.sel { background: #777; padding-left: 0; }
.tr span.sel { margin-left: 2px; }
.hscroll { margin-top: auto; display: flex; height: 14px; background: #f0f0f0; }
.hscroll button { width: 14px; }
.hscroll path { fill: none; stroke: #333; stroke-width: 1.500; }
.hscroll i { width: 14px; margin-right: auto; background: #cdcdcd; height: 12px; margin-top: 1px; }

.viewport { position: relative; flex: 1; min-width: 0; background: #363636; border: 1px solid #7c6526; border-width: 1px 2px 1px 1px; }
.vplabel { display: flex; gap: 8px; padding: 3px 0 0 3px; font-size: 9px; line-height: 14px; color: #bcbcbc; }
.vplabel b { font: 11px/14px "Liberation Sans", sans-serif; }
.canvas { position: absolute; inset: 0; width: 100%; height: 100%; }
.ax { font: 11px "Liberation Sans", sans-serif; }
.cube { position: absolute; right: 10px; top: 24px; }
.note { position: absolute; font: 24px/28px "Open Sans", "Noto Sans", sans-serif; color: #fb3a3a; }
.two { left: 305px; top: 67px; }
.one { right: 172px; top: 167px; }
.redbox { position: absolute; border: 5px solid #fb3a3a; }
.tall { left: 480px; top: 46px; width: 146px; height: 577px; }
.short { right: -3px; top: 167px; width: 153px; height: 26px; }

.cmd { display: flex; flex-direction: column; width: 165px; padding: 0 3px 1px 5px; }
.tabs { display: flex; margin: 4px 1px 0 -1px; gap: 1px; }
.tabs button { flex: 1; height: 21px; background: #393939; border-radius: 2px 2px 0 0; }
.tabs .on { background: #444; border: 1px dotted #777; }
.namerow { display: flex; margin: 6px 0 8px 3px; gap: 4px; padding-right: 1px; }
.field { flex: 1; height: 15px; background: #636363; padding-left: 2px; color: #ccc; }
.swatch { width: 13px; height: 15px; background: #bb8133; border: 1px solid #333; }
.mods { margin: 0 0 4px 3px; color: #ccc; }
.mods select { padding-left: 1px; }
.stackbox { height: 84px; margin-left: 3px; border: 1px solid #cfcfd8; color: #f0f0f0; }
.srow { display: flex; height: 14px; align-items: center; }
.srow.top { padding-left: 4px; gap: 7px; height: 12px; }
.srow.on { height: 16px; }
.srow i { width: 13px; margin-left: 9px; border-top: 1px dashed #222; }
.srow span { flex: 1; display: flex; align-items: center; padding-left: 1px; height: 14px; }
.srow.on span { background: #5e8ac7; height: 16px; }
.srow.last { height: 13px; border-bottom: 1px solid #888; }
.dots { margin-left: auto; margin-right: 3px; }
.stacktools { display: flex; align-items: center; justify-content: space-between; height: 26px; margin: 1px 33px 0 4px; }
.stacktools i { width: 1px; height: 12px; background: #222; }
.split { display: flex; align-items: center; gap: 4px; height: 14px; margin: 0 2px 1px 6px; }
.split i { flex: 1; height: 1px; background: #6e6e6e; }
.split b { width: 9px; border-top: 2px dotted #888; }
.rollwrap { flex: 1; display: flex; gap: 2px; margin-right: -2px; }
.rollout { flex: 1; background: #515151; border-radius: 2px; color: #e8e8e8; margin-left: 1px; }
.rollout h3 { display: flex; align-items: center; gap: 6px; height: 14px; margin: 0; padding: 0 8px 0 5px; font-size: 10px; font-weight: 700; }
.hg { margin-left: auto; }
.ck { display: flex; align-items: center; gap: 3px; height: 15px; padding-left: 16px; white-space: nowrap; }
.ck.in { padding-left: 28px; }
.off { color: #818181; }
input[type="checkbox"] { appearance: none; width: 8px; height: 8px; background: #646464; flex: none; }
input[type="checkbox"]:checked::after { content: ""; display: block; width: 6px; height: 4px; margin: 1px; border: solid #fff; border-width: 0 0 1px 1px; transform: rotate(-45deg); }
input[type="radio"] { appearance: none; width: 9px; height: 9px; border-radius: 50%; background: #686868; flex: none; }
input[type="radio"]:checked { background: #e8e8e8; border: 2px solid #606060; }
fieldset { margin: 1px 20px 0 18px; padding: 0 0 4px 0; border: 1px solid #3b3b3b; border-radius: 2px; min-width: 0; }
legend { display: flex; align-items: center; gap: 10px; height: 18px; padding: 0; margin-left: 4px; width: 92px; }
legend label { display: flex; align-items: center; gap: 6px; }
legend i { width: 8px; height: 1px; background: #333; margin-right: -8px; }
.rd { display: flex; align-items: center; gap: 6px; height: 16px; padding-left: 5px; }
legend + .rd { height: 15px; }
.sp { display: flex; align-items: center; justify-content: flex-end; gap: 3px; height: 16px; padding-right: 5px; }
.spin { position: relative; display: flex; width: 54px; height: 13px; background: #646464; border: 1px solid #484848; }
.spin input { width: 100%; padding-left: 1px; font: 9px/11px "Liberation Mono", monospace; color: #d0d0d0; }
.spin::before, .spin::after { content: ""; position: absolute; right: 2px; width: 5px; height: 3px; background: #ddd; }
.spin::before { top: 2px; clip-path: polygon(50% 0, 100% 100%, 0 100%); }
.spin::after { bottom: 2px; clip-path: polygon(0 0, 100% 0, 50% 100%); }
.off .spin { background: #575757; }
.off .spin input { color: #7c7c7c; }
.off .spin::before, .off .spin::after { background: #888; }
.ratio { margin-top: 1px; }
.ratio label { color: #818181; }
.ratio .spin { width: 42px; }
.ratio button { width: 10px; height: 12px; background: #666; border-radius: 2px; }
.smooth { margin-top: 2px; }
.th2 { height: 14px; padding-right: 24px; }
.vscroll { width: 6px; background: #393939; border-radius: 3px; }
.vscroll i { display: block; height: 64px; margin: 0 1px; background: #5e5e5e; border-radius: 2px; }

.slider { display: flex; gap: 1px; align-items: center; height: 21px; padding: 3px 0 3px 8px; font: 10px/14px "Liberation Mono", monospace; color: #c4c4c4; flex: none; }
.slider button { width: 12px; height: 14px; background: #5e5e5e; border-radius: 2px; }
.slider .thumb { width: 102px; }
.track { display: flex; height: 20px; margin-left: 7px; flex: none; }
.mini { width: 40px; height: 20px; padding-right: 6px; }
.ruler { flex: 1; display: flex; background: linear-gradient(#242424, #2c2c2c); margin-right: 41px; padding: 0 4px 0 6px; }
.tick { position: relative; flex: 1 1 0; width: 0; display: flex; align-items: flex-end; font: 9px/10px "Liberation Mono", monospace; color: #aaa; background: linear-gradient(#5c5c5c, #5c5c5c) 0 0 / 1px 10px no-repeat; }
.tick.major { background-size: 1px 19px; }
.tick.end { flex: 0 0 1px; }
.tick span { width: 0; display: flex; justify-content: center; position: relative; }
.tick.first::before { content: ""; position: absolute; left: -3px; top: 1px; width: 7px; height: 18px; background: #8a8018; border: 1px solid #5d570f; }
.tick.first span { color: #d8d060; }

.status { display: flex; align-items: flex-start; height: 46px; padding: 4px 8px 0 2px; flex: none; }
.listener { width: 83px; height: 38px; border: 1px solid #999; background: #fff; display: flex; flex-direction: column; }
.listener div { height: 19px; background: #dcc4c4; border-bottom: 2px solid #999; }
.listener input { width: 100%; flex: 1; padding-left: 3px; font: 9px/14px "Liberation Mono", monospace; color: #1919d8; }
.msgs { align-self: stretch; margin-left: 2px; padding-left: 2px; border-left: 2px solid #111; flex: 1; min-width: 0; white-space: pre; }
.msgs p { margin: 2px 0 6px; line-height: 14px; color: #ddd; }
.msgs p span { font: 9px/14px "Liberation Mono", monospace; }
.coords { margin-right: 30px; margin-top: 2px; flex: none; }
.crow { display: flex; align-items: center; height: 16px; }
.crow > button { width: 16px; margin-right: 6px; }
.crow label { display: flex; gap: 2px; margin-right: 10px; font: 9px/14px "Liberation Mono", monospace; color: #ddd; align-items: center; }
.crow label input { width: 47px; height: 14px; background: #5c5c5c; color: #848484; padding-left: 2px; }
.grid { white-space: pre; margin-left: 2px; }
.grid span { font: 9px/14px "Liberation Mono", monospace; }
.marker { margin-top: 3px; height: 18px; justify-content: flex-end; }
.marker button { width: 17px; background: #5e8ac7; margin-right: 3px; border-radius: 2px; }
.playback { width: 100px; margin-top: 1px; flex: none; }
.prow { display: flex; align-items: center; height: 18px; gap: 1px; }
.frame { width: 57px; height: 14px; margin: 0 2px 0 2px; background: #5c5c5c; }
.bigkey { width: 33px; height: 36px; margin: 1px 3px 0 8px; background: #636363; border-radius: 3px; flex: none; }
.keys { display: grid; grid-template-columns: 54px 92px; gap: 2px 4px; margin-top: 1px; flex: none; }
.btn { height: 16px; background: #5e5e5e; border-radius: 3px; }
.kf { display: flex; gap: 2px; }
.kf .btn { flex: 1; margin-right: 2px; }
.nav { display: grid; grid-template-columns: repeat(4, 18px); gap: 0 1px; margin-left: 11px; flex: none; }
.nav button { height: 18px; }
</style>
